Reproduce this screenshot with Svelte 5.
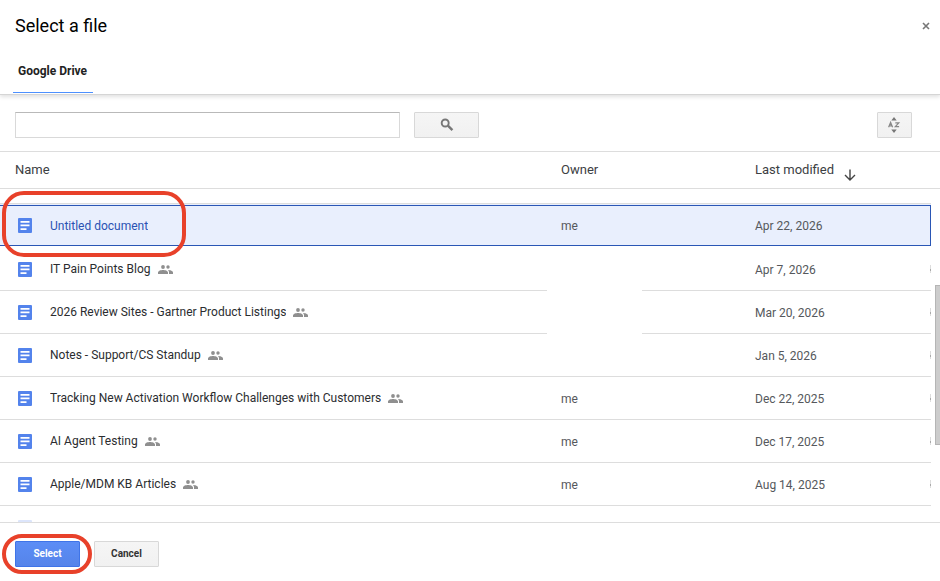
<script>
  const files = [
    { name: "Untitled document", owner: "me", modified: "Apr 22, 2026", shared: false },
    { name: "IT Pain Points Blog", owner: "", modified: "Apr 7, 2026", shared: true },
    { name: "2026 Review Sites - Gartner Product Listings", owner: "", modified: "Mar 20, 2026", shared: true },
    { name: "Notes - Support/CS Standup", owner: "", modified: "Jan 5, 2026", shared: true },
    { name: "Tracking New Activation Workflow Challenges with Customers", owner: "me", modified: "Dec 22, 2025", shared: true },
    { name: "AI Agent Testing", owner: "me", modified: "Dec 17, 2025", shared: true },
    { name: "Apple/MDM KB Articles", owner: "me", modified: "Aug 14, 2025", shared: true },
  ];

  let selected = 0;
  let query = "";
</script>

{#snippet docIcon()}
  <svg class="doc" viewBox="0 0 14 15" aria-hidden="true">
    <rect width="14" height="15" rx="1" fill="#5383ec" />
    <path d="M2.5 3h9v1.7h-9zM2.5 6.6h9v1.7h-9zM2.5 10.2h6v1.7h-6z" fill="#fff" />
  </svg>
{/snippet}

<div class="picker">
  <header>
    <h1>Select a file</h1>
    <button class="close" aria-label="Close">
      <svg viewBox="0 0 8 8"><path d="M1 1l6 6M7 1L1 7" stroke="#777" stroke-width="1.6" /></svg>
    </button>
    <nav><a href="#drive">Google Drive</a></nav>
  </header>

  <form class="toolbar" on:submit|preventDefault>
    <input type="text" aria-label="Search files" bind:value={query} />
    <button class="btn" aria-label="Search">
      <svg width="14" height="14" viewBox="0 0 14 14">
        <circle cx="5.2" cy="5" r="3.5" fill="none" stroke="#777" stroke-width="1.9" />
        <path d="M7.9 7.7l4.5 4.5" stroke="#777" stroke-width="2.4" />
      </svg>
    </button>
    <button type="button" class="btn sort" aria-label="Sort options">
      <svg width="14" height="16" viewBox="0 0 14 16">
        <path d="M6 0l2.7 3.5H3.3zM6 16l2.7-3.5H3.3z" fill="#777" />
        <path d="M.6 10.2L2.6 5.4l2 4.8M1.4 8.8h2.4M7.3 5.9h3.5L7.3 9.7h3.8" fill="none" stroke="#888" stroke-width="1.2" />
      </svg>
    </button>
  </form>

  <div class="head">
    <span>Name</span>
    <span>Owner</span>
    <span>
      Last modified
      <svg width="12" height="12" viewBox="0 0 12 12" aria-hidden="true">
        <path d="M6 .5v10.3M1 6l5 5 5-5" fill="none" stroke="#444" stroke-width="1.4" />
      </svg>
    </span>
  </div>

  <div class="list">
    <table aria-label="Files">
      <colgroup>
        <col />
        <col class="col-owner" />
        <col class="col-date" />
      </colgroup>
      <tbody>
        {#each files as file, i}
          <tr class:selected={i === selected} on:click={() => (selected = i)}>
            <td class="name">
              <div>
                {@render docIcon()}
                <span>{file.name}</span>
                {#if file.shared}
                  <svg class="people" viewBox="0 0 15 9" aria-label="Shared">
                    <circle cx="5" cy="2" r="1.9" />
                    <circle cx="10" cy="2" r="1.7" />
                    <path d="M0 9V7.5C0 5.8 3 5 5 5s5 .8 5 2.5V9zM11 9h4V7.5C15 6 12.2 5.1 10 5.1c.7.6 1 1.3 1 2.2z" />
                  </svg>
                {/if}
              </div>
            </td>
            <td>{file.owner}</td>
            <td class="date">{file.modified}</td>
          </tr>
        {/each}
        <tr class="next">
          <td class="name"><div>{@render docIcon()}</div></td>
          <td></td>
          <td></td>
        </tr>
      </tbody>
    </table>
    <div class="blank"></div>
    <div class="thumb"></div>
    <div class="ring ring-file"></div>
  </div>

  <footer>
    <div class="primary">
      <button class="btn select">Select</button>
      <div class="ring ring-select"></div>
    </div>
    <button class="btn">Cancel</button>
  </footer>
</div>

<style>
  :global(body) {
    margin: 0;
    background: #fff;
  }

  .picker {
    display: flex;
    flex-direction: column;
    height: 100vh;
    font-family: Roboto, "Liberation Sans", sans-serif;
    font-size: 12px;
    color: #333;
  }

  header {
    display: grid;
    grid-template-columns: 1fr auto;
    align-items: center;
    padding: 14px 8px 0 13px;
    border-bottom: 1px solid #d5d5d5;
    box-shadow: 0 2px 4px rgba(0, 0, 0, 0.12);
  }

  h1 {
    margin: 0;
    padding-left: 2px;
    font-size: 18px;
    font-weight: 400;
    line-height: 24px;
    color: #000;
  }

  .close {
    display: flex;
    padding: 2px;
    border: 0;
    background: none;
    cursor: pointer;
  }

  .close svg {
    width: 8px;
    height: 8px;
  }

  nav {
    display: flex;
    grid-column: 1 / -1;
    padding-top: 12px;
  }

  nav a {
    padding: 0 6px 0 5px;
    border-bottom: 1px solid #4d90fe;
    margin-bottom: 1px;
    font-weight: 700;
    line-height: 42px;
    color: #222;
    text-decoration: none;
  }

  .toolbar {
    display: flex;
    gap: 14px;
    padding: 17px 28px 13px 15px;
    border-bottom: 1px solid #ddd;
  }

  input {
    box-sizing: border-box;
    width: 385px;
    height: 26px;
    padding: 0 8px;
    border: 1px solid #d9d9d9;
    border-top-color: #b9b9b9;
    font: inherit;
  }

  .btn {
    display: flex;
    align-items: center;
    justify-content: center;
    width: 65px;
    height: 26px;
    padding: 0;
    border: 1px solid #d8d8d8;
    border-radius: 1px;
    background: linear-gradient(#f5f5f5, #f1f1f1);
    font: 700 10px/24px Roboto, "Liberation Sans", sans-serif;
    color: #333;
    cursor: pointer;
  }

  .sort {
    width: 35px;
    margin-left: auto;
  }

  .head {
    display: grid;
    grid-template-columns: 1fr 194px 176px;
    padding: 0 9px 0 0;
    border-bottom: 1px solid #ddd;
    font-size: 13px;
    line-height: 36px;
    color: #3c4043;
  }

  .head span:first-child {
    padding-left: 15px;
  }

  .head svg {
    margin-left: 7px;
    vertical-align: -7px;
  }

  .list {
    position: relative;
    flex: 1;
    min-height: 0;
    overflow: hidden;
    padding: 14px 9px 0 0;
  }

  table {
    width: 100%;
    border-top: 1px solid #ddd;
    border-spacing: 0;
    table-layout: fixed;
  }

  .col-owner {
    width: 194px;
  }

  .col-date {
    width: 176px;
  }

  td {
    box-sizing: border-box;
    height: 43px;
    padding: 1px 0 0;
    border-bottom: 1px solid #ddd;
    color: #55585c;
  }

  .name {
    padding: 0 0 0 18px;
    color: #2b2d30;
  }

  .name div {
    display: flex;
    align-items: center;
  }

  .name span {
    margin: 0 7px 0 18px;
    overflow: hidden;
    text-overflow: ellipsis;
    white-space: nowrap;
  }

  .doc {
    flex: none;
    width: 14px;
    height: 15px;
  }

  .people {
    flex: none;
    width: 15px;
    height: 9px;
    fill: #8f8f8f;
  }

  .date {
    background: linear-gradient(#aaa, #aaa) right 21px / 1px 2px no-repeat,
      linear-gradient(#ddd, #ddd) right center / 1px 8px no-repeat;
  }

  .selected td {
    height: 44px;
    border-top: 1px solid #e8eefc;
    border-bottom: 2px solid #fff;
    background: #e9effd;
    background-clip: padding-box;
    box-shadow: inset 0 1px #2a56b5, inset 0 -1px #2a56b5;
  }

  .selected .name {
    color: #2a52b3;
  }

  .selected .date {
    box-shadow: inset 0 1px #2a56b5, inset -1px -1px #2a56b5;
  }

  .next {
    opacity: 0.2;
  }

  .blank {
    position: absolute;
    top: 60px;
    right: 298px;
    width: 95px;
    height: 120px;
    background: #fff;
  }

  .thumb {
    position: absolute;
    top: 96px;
    right: 0;
    box-sizing: border-box;
    width: 5px;
    height: 160px;
    border: 1px solid #b5b5b5;
    border-right: 0;
    background: #ccc;
  }

  .ring {
    position: absolute;
    box-sizing: border-box;
    border: 4px solid #e8412a;
    pointer-events: none;
  }

  .ring-file {
    top: 2px;
    left: 2px;
    width: 184px;
    height: 66px;
    border-radius: 22px;
  }

  footer {
    display: flex;
    gap: 14px;
    padding: 18px 15px 14px;
    border-top: 1px solid #ddd;
  }

  .primary {
    position: relative;
  }

  .select {
    border-color: #3f74e8;
    background: linear-gradient(#5c8df6, #5584ea);
    color: #fff;
  }

  .ring-select {
    inset: -7px -12px -7px -13px;
    border-radius: 20px;
  }
</style>
